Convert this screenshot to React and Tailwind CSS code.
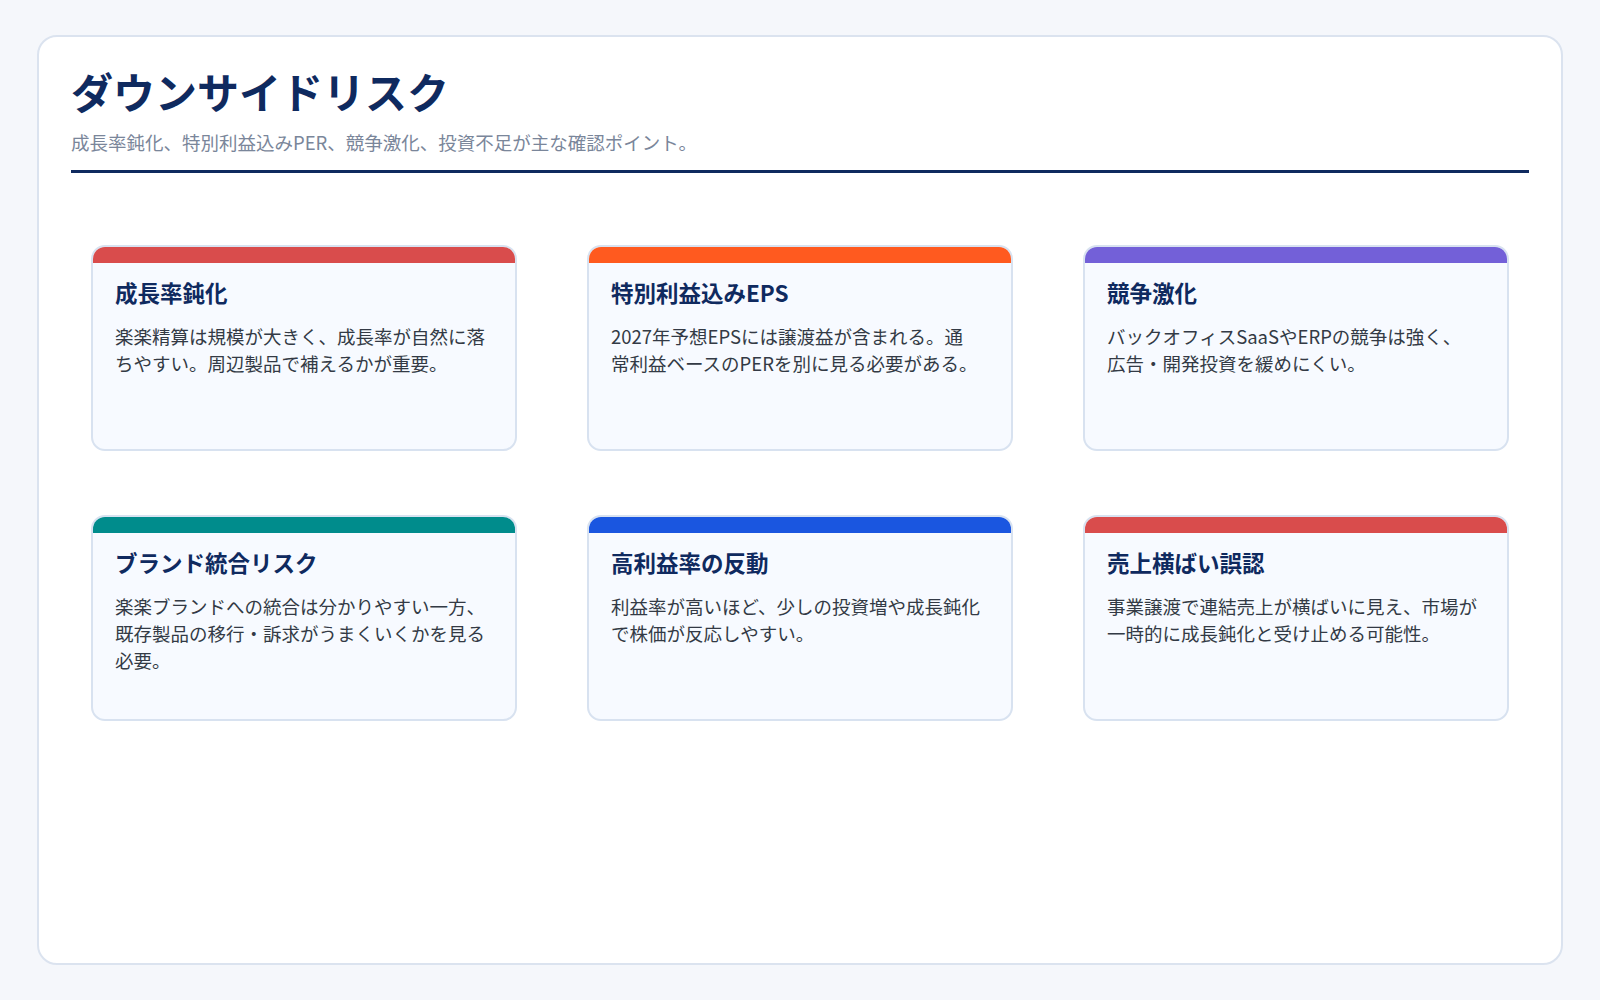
const cards = [
  { c: "bg-[#d94c4c]", t: "成長率鈍化", b: "楽楽精算は規模が大きく、成長率が自然に落ちやすい。周辺製品で補えるかが重要。" },
  { c: "bg-[#ff5a1f]", t: "特別利益込みEPS", b: "2027年予想EPSには譲渡益が含まれる。通常利益ベースのPERを別に見る必要がある。" },
  { c: "bg-[#7360d8]", t: "競争激化", b: "バックオフィスSaaSやERPの競争は強く、広告・開発投資を緩めにくい。" },
  { c: "bg-[#008c8c]", t: "ブランド統合リスク", b: "楽楽ブランドへの統合は分かりやすい一方、既存製品の移行・訴求がうまくいくかを見る必要。" },
  { c: "bg-[#1a56e0]", t: "高利益率の反動", b: "利益率が高いほど、少しの投資増や成長鈍化で株価が反応しやすい。" },
  { c: "bg-[#d94c4c]", t: "売上横ばい誤認", b: "事業譲渡で連結売上が横ばいに見え、市場が一時的に成長鈍化と受け止める可能性。" },
];

export default function App() {
  return (
    <div className="min-h-screen bg-[#f5f7fb] px-[37px] py-[35px]" style={{ fontFamily: '"Noto Sans CJK JP", "Noto Sans", sans-serif' }}>
      <div className="h-[930px] rounded-[20px] border-2 border-[#dbe3ef] bg-white px-[32px] pt-[24px]">
        <h1 className="text-[42px] font-bold leading-[60px] text-[#0f2a5f]">ダウンサイドリスク</h1>
        <p className="mt-[8px] text-[18.5px] leading-[26px] text-[#7a869a]">成長率鈍化、特別利益込みPER、競争激化、投資不足が主な確認ポイント。</p>
        <div className="mt-[15px] h-[3px] bg-[#0f2a5f]" />
        <div className="mt-[72px] grid grid-cols-3 gap-x-[70px] gap-y-[64px] px-[20px]">
          {cards.map((x, i) => (
            <div key={i} className="h-[206px] flex flex-col rounded-[14px] border-2 border-[#d8e2f0] bg-[#f7faff] overflow-hidden">
              <div className={`h-[16px] ${x.c}`} />
              <div className="px-[22px] pt-[14px] pr-[30px]">
                <h3 className="text-[22.5px] font-bold leading-[30px] text-[#0f2a5f]">{x.t}</h3>
                <p className="mt-[16px] text-[18.5px] leading-[27px] text-[#333a45]">{x.b}</p>
              </div>
            </div>
          ))}
        </div>
      </div>
    </div>
  );
}
